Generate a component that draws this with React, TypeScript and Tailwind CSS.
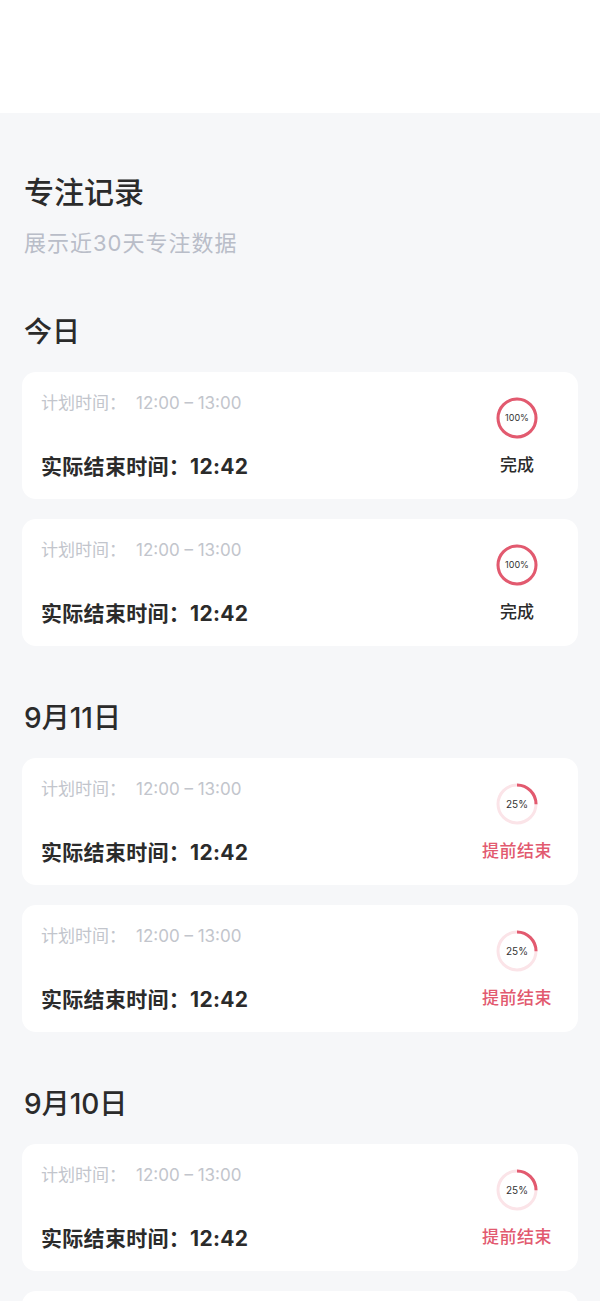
import React from 'react';

type Record = {
    id: number;
    planned: string;
    actualEnd: string;
    percent: number;
    status: 'done' | 'early';
};

type Section = {
    title: string;
    records: Record[];
};

const sections: Section[] = [
    {
        title: '今日',
        records: [
            { id: 1, planned: '12:00 – 13:00', actualEnd: '12:42', percent: 100, status: 'done' },
            { id: 2, planned: '12:00 – 13:00', actualEnd: '12:42', percent: 100, status: 'done' },
        ],
    },
    {
        title: '9月11日',
        records: [
            { id: 3, planned: '12:00 – 13:00', actualEnd: '12:42', percent: 25, status: 'early' },
            { id: 4, planned: '12:00 – 13:00', actualEnd: '12:42', percent: 25, status: 'early' },
        ],
    },
    {
        title: '9月10日',
        records: [
            { id: 5, planned: '12:00 – 13:00', actualEnd: '12:42', percent: 25, status: 'early' },
            { id: 6, planned: '12:00 – 13:00', actualEnd: '12:42', percent: 25, status: 'early' },
        ],
    },
];

const font = { fontFamily: 'Inter, "Noto Sans CJK SC", sans-serif' };

const ProgressRing: React.FC<{ percent: number }> = ({ percent }) => {
    const r = 19;
    const c = 2 * Math.PI * r;
    return (
        <div className="relative h-[42px] w-[42px]">
            <svg width="42" height="42" viewBox="0 0 42 42" className="-rotate-90">
                <circle cx="21" cy="21" r={r} fill="none" stroke="#fbe4e8" strokeWidth="3" />
                <circle
                    cx="21"
                    cy="21"
                    r={r}
                    fill="none"
                    stroke="#e25a6f"
                    strokeWidth="3"
                    strokeDasharray={`${(c * percent) / 100} ${c}`}
                />
            </svg>
            <span
                className={`absolute inset-0 flex items-center justify-center text-[#333] ${percent === 100 ? 'text-[9px]' : 'text-[10px]'}`}
            >
                {percent}%
            </span>
        </div>
    );
};

const RecordCard: React.FC<{ record: Record }> = ({ record }) => (
    <div className="flex h-[127px] items-center justify-between rounded-[14px] bg-white pl-[19px] pr-[25px]">
        <div className="flex flex-col">
            <p className="text-[17px] leading-none text-[#c2c5cc]">
                计划时间：<span className="ml-[10px]">{record.planned}</span>
            </p>
            <p className="mt-[44px] text-[21px] font-bold leading-none tracking-[0.3px] text-[#2b2b2b]">
                实际结束时间：{record.actualEnd}
            </p>
        </div>
        <div className="flex w-[72px] flex-col items-center">
            <ProgressRing percent={record.percent} />
            <span
                className={`mt-[18px] text-[17px] font-medium leading-none ${record.status === 'done' ? 'text-[#2b2b2b]' : 'tracking-[0.5px] text-[#e25a6f]'}`}
            >
                {record.status === 'done' ? '完成' : '提前结束'}
            </span>
        </div>
    </div>
);

const App: React.FC = () => {
    return (
        <div className="min-h-[1301px] bg-[#f6f7f9]" style={font}>
            <div className="h-[113px] bg-white" />
            <div className="px-[22px] pt-[64px] pb-10">
                <h1 className="ml-[2px] text-[30px] font-medium leading-none text-[#2b2b2b]">专注记录</h1>
                <p className="ml-[2px] mt-[25px] text-[22px] leading-none tracking-[1px] text-[#b9bdc8]">展示近30天专注数据</p>

                {sections.map((section, i) => (
                    <div key={section.title} className={i === 0 ? 'mt-[64px]' : 'mt-[58px]'}>
                        <h2 className="ml-[2px] text-[28px] font-medium leading-none text-[#2b2b2b]">{section.title}</h2>
                        <div className="mt-[26px] flex flex-col gap-[20px]">
                            {section.records.map(record => (
                                <RecordCard key={record.id} record={record} />
                            ))}
                        </div>
                    </div>
                ))}
            </div>
        </div>
    );
};

export default App;
